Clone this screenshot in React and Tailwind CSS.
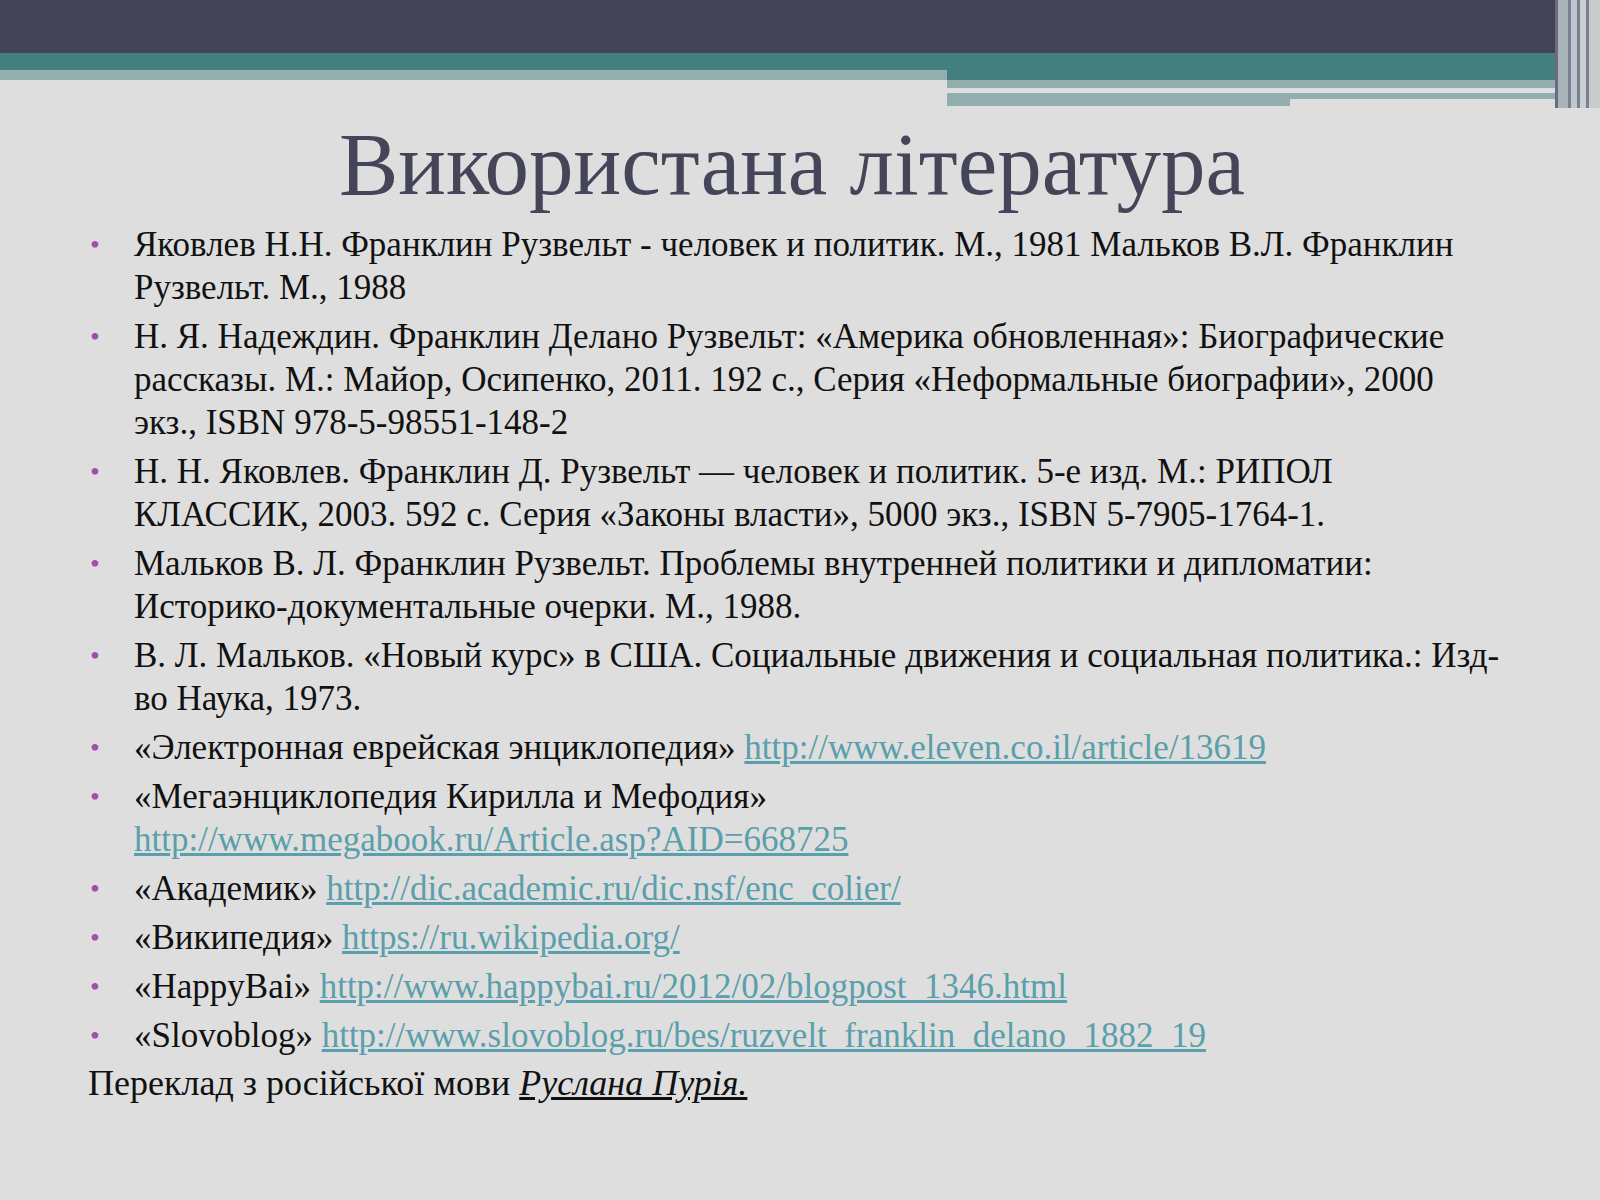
export default function App() {
  const items = [
    [<>Яковлев Н.Н. Франклин Рузвельт - человек и политик. М., 1981 Мальков В.Л. Франклин Рузвельт. М., 1988</>],
    [<>Н. Я. Надеждин. Франклин Делано Рузвельт: «Америка обновленная»: Биографические рассказы. М.: Майор, Осипенко, 2011. 192 с., Серия «Неформальные биографии», 2000 экз., ISBN 978-5-98551-148-2</>],
    [<>Н. Н. Яковлев. Франклин Д. Рузвельт — человек и политик. 5-е изд. М.: РИПОЛ КЛАССИК, 2003. 592 с. Серия «Законы власти», 5000 экз., ISBN 5-7905-1764-1.</>],
    [<>Мальков В. Л. Франклин Рузвельт. Проблемы внутренней политики и дипломатии: Историко-документальные очерки. М., 1988.</>],
    [<>В. Л. Мальков. «Новый курс» в США. Социальные движения и социальная политика.: Изд-во Наука, 1973.</>],
    [<>«Электронная еврейская энциклопедия» <L>http://www.eleven.co.il/article/13619</L></>],
    [<>«Мегаэнциклопедия Кирилла и Мефодия» <br /><L>http://www.megabook.ru/Article.asp?AID=668725</L></>],
    [<>«Академик» <L>http://dic.academic.ru/dic.nsf/enc_colier/</L></>],
    [<>«Википедия» <L>https://ru.wikipedia.org/</L></>],
    [<>«HappyBai» <L>http://www.happybai.ru/2012/02/blogpost_1346.html</L></>],
    [<>«Slovoblog» <L>http://www.slovoblog.ru/bes/ruzvelt_franklin_delano_1882_19</L></>],
  ];
  return (
    <div className="w-[1600px] h-[1200px] bg-[#dedede] overflow-hidden relative" style={{ fontFamily: '"Liberation Serif", serif' }}>
      <div className="h-[53px] bg-[#424357]" />
      <div className="flex">
        <div className="w-[947px]">
          <div className="h-[17px] bg-[#447f80]" />
          <div className="h-[10px] bg-[#95aeb0]" />
        </div>
        <div className="flex-1">
          <div className="h-[27px] bg-[#447f80]" />
          <div className="h-[8px] bg-[#92aeae]" />
          <div className="h-[5px] bg-[#dedede] w-[535px]" />
          <div className="h-[6px] bg-[#92aeae]" />
          <div className="flex h-[7px]"><div className="w-[343px] bg-[#92aeae]" /><div className="flex-1 bg-[#dedede]" /></div>
        </div>
      </div>
      <div className="absolute top-0 right-0 h-[108px] w-[45px] flex">
        <div className="w-[3px] bg-[#6a6a80]" />
        <div className="w-[10px] bg-[#a8b4b8]" />
        <div className="w-[3px] bg-[#7a8090]" />
        <div className="w-[6px] bg-[#c0c8cc]" />
        <div className="w-[3px] bg-[#7a8090]" />
        <div className="w-[6px] bg-[#c8d0d2]" />
        <div className="w-[3px] bg-[#7a8090]" />
        <div className="flex-1 bg-[#c8cccc]" />
      </div>
      <h1 className="text-center text-[89px] leading-none text-[#45455a] mt-[14px] pr-[16px]">Використана література</h1>
      <ul className="mt-[14px] pl-[90px] pr-[100px] text-[35px] leading-[43px] text-[#111]">
        {items.map((it, i) => (
          <li key={i} className="flex mb-[6px]">
            <span className="w-[44px] shrink-0 text-[#a050a8] text-[28px]">•</span>
            <span>{it[0]}</span>
          </li>
        ))}
      </ul>
      <p className="pl-[88px] text-[36px] leading-[43px] text-[#111] mt-[-1px]">Переклад з російської мови <i className="underline">Руслана Пурія.</i></p>
    </div>
  );
}
function L({ children }) {
  return <span className="text-[#5a9fab] underline">{children}</span>;
}
